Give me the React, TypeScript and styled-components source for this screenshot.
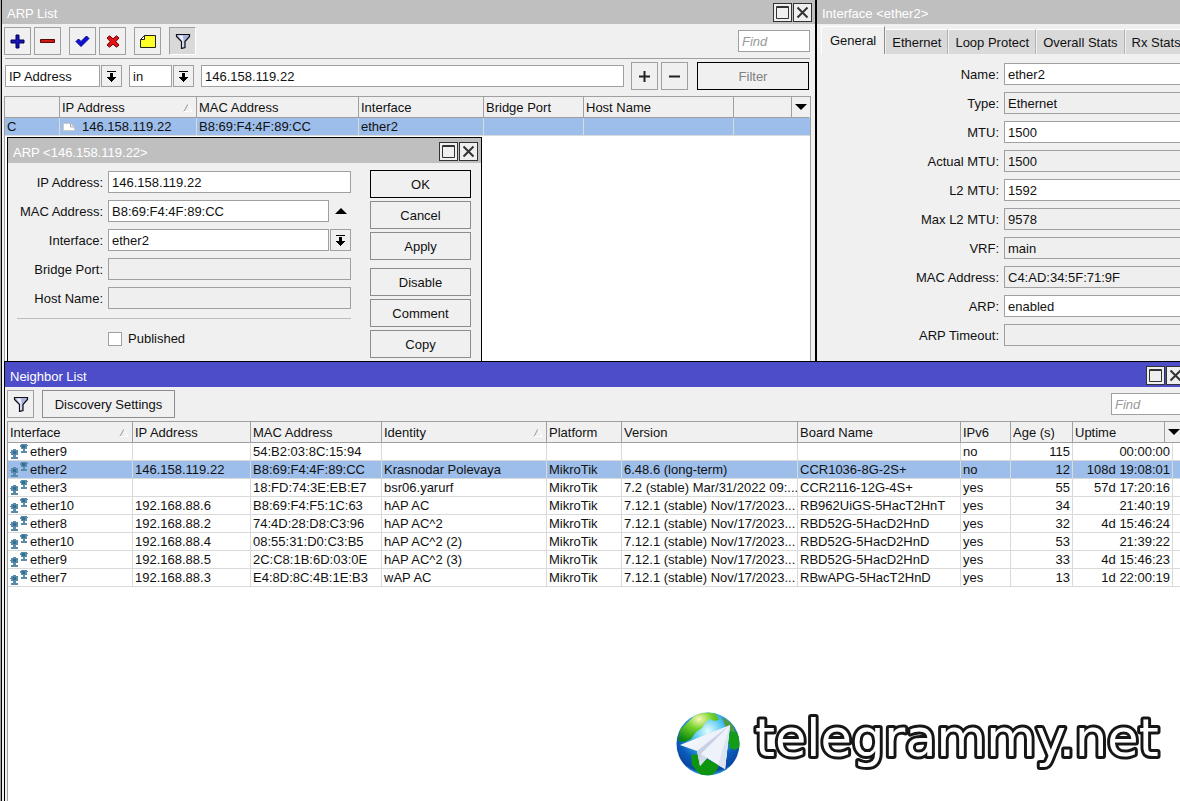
import React from "react";
import styled, { createGlobalStyle, css } from "styled-components";

const GlobalStyle = createGlobalStyle`
  *, *::before, *::after { box-sizing: border-box; }
  body {
    margin: 0;
    background: #a9a9a9;
    font: 13px/16px "Liberation Sans", Arial, sans-serif;
    color: #111;
  }
  button, input, select { font: inherit; color: inherit; margin: 0; border-radius: 0; }
`;

const Desktop = styled.main`
  position: relative;
  height: 100vh;
  min-height: 620px;
  overflow: hidden;
`;

/* Windows are placed freely on the desktop, by their edges. */
const WindowFrame = styled.section<{
  $top: number;
  $left: number;
  $right?: number;
  $width?: number;
  $fill?: boolean;
}>`
  position: absolute;
  top: ${(p) => p.$top}px;
  left: ${(p) => p.$left}px;
  ${(p) => p.$right !== undefined && `right: ${p.$right}px;`}
  ${(p) => p.$width !== undefined && `width: ${p.$width}px;`}
  ${(p) => p.$fill && "bottom: -2px;"}
  display: flex;
  flex-direction: column;
  border: 1px solid #000;
  background: #f0f0f0;
`;

const TitleBar = styled.header<{ $active?: boolean }>`
  display: flex;
  align-items: flex-start;
  gap: 1px;
  height: 25px;
  padding: 4px 3px 0 5px;
  background: ${(p) => (p.$active ? "#4d4dc9" : "#bfbfbf")};
  color: #fff;
`;

const Title = styled.h2`
  flex: 1;
  margin: 0;
  padding-top: 3px;
  font-size: 13px;
  line-height: 16px;
  font-weight: normal;
`;

const TitleButton = styled.button`
  display: flex;
  align-items: center;
  justify-content: center;
  width: 19px;
  height: 19px;
  padding: 0;
  border: 1px solid #333;
  background: #efefef;
`;

const WindowBody = styled.div`
  flex: 1;
  display: flex;
  flex-direction: column;
  padding: 3px 4px 0 2px;
`;

const Toolbar = styled.div`
  display: flex;
  align-items: center;
  gap: 8px;
  padding-right: 1px;
`;

const ButtonGroup = styled.div`
  display: flex;
  gap: 3px;
`;

const ConditionButtons = styled(ButtonGroup)`
  padding-right: 2px;
`;

const Spacer = styled.div`
  flex: 1;
`;

const ToolButton = styled.button<{ $pressed?: boolean }>`
  display: flex;
  align-items: center;
  justify-content: center;
  width: 27px;
  height: 28px;
  padding: 0;
  border: 1px solid #a0a0a0;
  background: #f0f0f0;
  ${(p) =>
    p.$pressed &&
    css`
      background: #d9d9d9;
      border-color: #a0a0a0 #fff #fff #a0a0a0;
    `}
`;

const PushButton = styled.button<{ $primary?: boolean; $muted?: boolean; $width: number }>`
  width: ${(p) => p.$width}px;
  height: 28px;
  padding: 1px 0 0;
  border: 1px solid ${(p) => (p.$primary ? "#000" : "#8c8c8c")};
  background: #f0f0f0;
  color: ${(p) => (p.$muted ? "#808080" : "#111")};
`;

const fieldLook = css`
  height: 22px;
  padding: 0 3px;
  border: 1px solid #a0a0a0;
  outline: none;
  background: #fff;
`;

const TextField = styled.input`
  ${fieldLook}
  flex: 1;
  min-width: 0;
  &:read-only { background: #efefef; }
`;

const FindField = styled.input`
  ${fieldLook}
  width: 72px;
  &::placeholder { color: #9a9a9a; font-style: italic; opacity: 1; }
`;

const SelectField = styled.select<{ $width?: number }>`
  ${fieldLook}
  padding: 1px 0 0 3px;
  appearance: none;
  ${(p) => (p.$width ? `width: ${p.$width}px;` : "flex: 1; min-width: 0;")}
`;

const Combo = styled.div`
  flex: 1;
  display: flex;
  gap: 1px;
`;

const FixedCombo = styled(Combo)`
  flex: none;
`;

const DropButton = styled.button<{ $plain?: boolean }>`
  display: flex;
  align-items: center;
  justify-content: center;
  width: 21px;
  height: 22px;
  padding: 0;
  border: 1px solid ${(p) => (p.$plain ? "transparent" : "#a0a0a0")};
  background: #f0f0f0;
`;

const Divider = styled.hr`
  height: 1px;
  margin: 3px 1px 3px 1px;
  border: 0;
  background: #a0a0a0;
`;

const FilterRow = styled.div`
  display: flex;
  align-items: center;
  gap: 7px;
  margin-bottom: 6px;
  padding: 0 2px 0 1px;
`;

const TablePane = styled.div`
  position: relative;
  flex: 1;
  border: 1px solid #a0a0a0;
  background: #fff;
`;

const ToolSpace = styled.div`
  height: 3px;
`;

const ColumnsButton = styled.button`
  position: absolute;
  top: 0;
  right: 0;
  display: flex;
  align-items: center;
  justify-content: center;
  width: 19px;
  height: 20px;
  padding: 0;
  border: 0;
  border-left: 1px solid #a0a0a0;
  background: #f0f0f0;
`;

const DataTable = styled.table`
  width: 100%;
  table-layout: fixed;
  border-collapse: separate;
  border-spacing: 0;
`;

const HeadCell = styled.th<{ $last?: boolean }>`
  height: 21px;
  padding: 1px 3px 0 2px;
  border-right: 1px solid ${(p) => (p.$last ? "transparent" : "#a0a0a0")};
  border-bottom: 1px solid #a0a0a0;
  background: #f0f0f0;
  background-clip: padding-box;
  font-weight: normal;
  text-align: left;
  white-space: nowrap;
`;

const HeadLabel = styled.span`
  display: flex;
  align-items: center;
  justify-content: space-between;
  padding-top: 1px;
`;

const BodyRow = styled.tr<{ $selected?: boolean }>`
  background: ${(p) => (p.$selected ? "#9dbeea" : "#fff")};
`;

const Cell = styled.td<{ $right?: boolean; $last?: boolean }>`
  height: 18px;
  padding: 0 2px;
  border-right: ${(p) => (p.$last ? "0" : "1px solid #dadada")};
  border-bottom: 1px solid #dadada;
  line-height: 16px;
  text-align: ${(p) => (p.$right ? "right" : "left")};
  white-space: nowrap;
  overflow: hidden;
`;

const IconText = styled.span<{ $gap: number }>`
  display: flex;
  align-items: center;
  gap: ${(p) => p.$gap}px;
`;

const DialogBody = styled.form`
  display: flex;
  gap: 19px;
  padding: 7px 10px 10px 9px;
`;

const Fields = styled.div`
  display: flex;
  flex-direction: column;
  flex: 1;
  gap: 7px;
  padding-top: 1px;
`;

const FieldRow = styled.div<{ $label: number }>`
  display: flex;
  align-items: center;
  gap: 5px;
  & > label:first-child {
    width: ${(p) => p.$label}px;
    padding-top: 2px;
    text-align: right;
    white-space: nowrap;
  }
`;

const FormRule = styled.hr`
  width: 100%;
  height: 1px;
  margin: 2px 0 5px;
  border: 0;
  background: #bcbcbc;
`;

const CheckRow = styled.label`
  display: flex;
  align-items: center;
  gap: 6px;
  padding-left: 91px;
`;

const CheckBox = styled.input`
  appearance: none;
  width: 14px;
  height: 14px;
  border: 1px solid #a0a0a0;
  background: #fff;
`;

const DialogButtons = styled.div`
  display: flex;
  flex-direction: column;
  gap: 8px;
`;

const ButtonStack = styled.div`
  display: flex;
  flex-direction: column;
  gap: 3px;
`;

const TabStrip = styled.div`
  display: flex;
  align-items: flex-end;
  gap: 1px;
  padding: 2px 0 0 4px;
`;

const Tab = styled.button<{ $active?: boolean }>`
  flex: none;
  height: ${(p) => (p.$active ? 28 : 25)}px;
  padding: ${(p) => (p.$active ? "0 8px" : "1px 6px 0")};
  border: 0;
  border-top: 1px solid #fff;
  border-left: ${(p) => (p.$active ? "1px solid #fff" : "0")};
  border-right: 1px solid ${(p) => (p.$active ? "#8c8c8c" : "#b4b4b4")};
  background: ${(p) => (p.$active ? "#f0f0f0" : "#d9d9d9")};
  white-space: nowrap;
`;

const InterfaceForm = styled.form`
  display: flex;
  flex-direction: column;
  gap: 7px;
  padding-top: 9px;
`;

const Watermark = styled.div`
  position: absolute;
  right: 12px;
  bottom: 22px;
  display: flex;
  align-items: center;
  gap: 4px;
`;

const DropIcon = () => (
  <svg width="11" height="11" viewBox="0 0 11 11" shapeRendering="crispEdges">
    <path d="M1 0h9v1H1zM4 2h3v4h3v1H9v1H8v1H7v1H6v1H5v-1H4V9H3V8H2V7H1V6h3z" fill="#000" />
  </svg>
);

const Triangle = ({ up }: { up?: boolean }) => (
  <svg width="12" height="6" viewBox="0 0 12 6">
    <path d={up ? "M0 6L6 0l6 6z" : "M0 0h12L6 6z"} fill="#000" />
  </svg>
);

const SortMark = () => (
  <svg width="10" height="10" viewBox="0 0 10 10" fill="none">
    <path d="M1 8.5L5 1" stroke="#999" />
    <path d="M5 1l4 7.5H1" stroke="#fff" />
  </svg>
);

const FunnelIcon = () => (
  <svg width="16" height="16" viewBox="0 0 16 16">
    <path d="M1.5 1.500h13v2L10 8.500v6L6.500 15.500v-7L1.500 3.500z" fill="#a9b2e2" stroke="#111" strokeWidth="1.200" />
    <path d="M3 2.500h5L8.500 8v6L7.300 14V8z" fill="#eef0ff" />
  </svg>
);

const PlusIcon = () => (
  <svg width="15" height="15" viewBox="0 0 15 15">
    <path d="M6 1h3v5h5v3H9v5H6V9H1V6h5z" fill="#1414b4" stroke="#000060" />
  </svg>
);

const MinusIcon = () => (
  <svg width="15" height="4" viewBox="0 0 15 4">
    <path d="M.5.5h14v3H.5z" fill="#d01818" stroke="#5a0808" />
  </svg>
);

const CheckIcon = () => (
  <svg width="15" height="13" viewBox="0 0 15 13">
    <path d="M1 6.500L3.500 4 6 6.500 11.500 1 14 3.500 6 11.500z" fill="#1010dc" stroke="#000080" />
  </svg>
);

const CrossIcon = () => (
  <svg width="14" height="13" viewBox="0 0 14 13">
    <path
      d="M1 3L3.500.8 7 3.800 10.500.8 13 3 9.800 6.500 13 10l-2.500 2.200L7 9.200l-3.500 3L1 10l3.200-3.500z"
      fill="#e01414"
      stroke="#700000"
    />
  </svg>
);

const NoteIcon = () => (
  <svg width="16" height="13" viewBox="0 0 16 13">
    <path d="M4.500.5h11v12H.5v-8z" fill="#ffff28" stroke="#222" />
    <path d="M4.500.5v4h-4z" fill="#fff" stroke="#222" />
  </svg>
);

const PageIcon = () => (
  <svg width="14" height="10" viewBox="0 0 14 10">
    <path d="M1.500 1.500h7l4 3.500v3.500h-11z" fill="#fff" stroke="#c9c9c9" />
    <path d="M8.500 1.500V5h4" fill="none" stroke="#aaa" />
  </svg>
);

const NeighborIcon = () => (
  <svg width="18" height="16" viewBox="0 0 18 16" fill="#5a8caa">
    <path d="M3 5h3v1h2v5H6v2h2v2H1v-2h2v-2H1V9H0V8h1V6h2z" />
    <path d="M11 0h6v1h1v1h-1v3h-2v2h2v2h-6V7h2V5h-2V3h-1V1h1z" />
    <path d="M3 7h3v3H3zM12 1h3v3h-3z" fill="#336f95" />
  </svg>
);

const GlobeIcon = () => (
  <svg width="64" height="64" viewBox="0 0 64 64">
    <defs>
      <radialGradient id="sea" cx="50%" cy="30%" r="68%">
        <stop offset="0" stopColor="#e6feff" />
        <stop offset=".36" stopColor="#4cc4f0" />
        <stop offset=".7" stopColor="#0b5cbc" />
        <stop offset=".92" stopColor="#0a47a0" />
        <stop offset="1" stopColor="#2b9be0" />
      </radialGradient>
      <radialGradient id="land" cx="52%" cy="24%" r="80%">
        <stop offset="0" stopColor="#fbf9b8" />
        <stop offset=".4" stopColor="#74d02a" />
        <stop offset="1" stopColor="#08860e" />
      </radialGradient>
      <linearGradient id="paper" x1="0" y1="0" x2="1" y2="1">
        <stop offset="0" stopColor="#fff" />
        <stop offset="1" stopColor="#d9e0f0" />
      </linearGradient>
      <clipPath id="disc">
        <circle cx="32" cy="32" r="31.500" />
      </clipPath>
    </defs>
    <g clipPath="url(#disc)">
      <path d="M0 0h64v64H0z" fill="url(#sea)" />
      <path d="M20 2l12-2 8 2 3 6-5 1-4-2-4 3-4 6-6 4-5 7-7 3-6-1L4 18z" fill="url(#land)" />
      <path d="M46 5l9 6 5 9-5-1-5-3-2-5z" fill="#4f9a3c" />
      <path d="M54 19l10 2v14l-5 3-5-2-2-8z" fill="#129c18" />
      <path d="M15 43l8-1 12 7 8 3-2 6-5 5-10 1-6-6-4-5z" fill="#0d950f" />
    </g>
    <path d="M54 13L4 33l17 6 3 15 7-8 18 11z" fill="url(#paper)" />
    <path d="M54 13L21 39l3 15 1-12z" fill="#c6d0e4" />
    <path d="M54 13L25 42l-1 12 7-8z" fill="#d3dbea" />
    <path d="M54 13L25 42l24 15z" fill="#eef2fb" />
    <path d="M54 13L42 53l7 4z" fill="#dde4f1" />
  </svg>
);

const Wordmark = () => (
  <svg width="424" height="70" viewBox="0 0 424 70">
    <text
      x="11"
      y="47"
      fontFamily="'DejaVu Sans', Verdana, sans-serif"
      fontSize="51"
      fill="#fff"
      stroke="#161616"
      strokeWidth="6"
      strokeLinejoin="round"
      paintOrder="stroke"
    >
      telegrammy.net
    </text>
  </svg>
);

const WindowButtons = () => (
  <>
    <TitleButton aria-label="Maximize">
      <svg width="13" height="13" viewBox="0 0 13 13">
        <path d="M.5.5h12v12H.5zM.5 1.500h12" fill="none" stroke="#333" />
      </svg>
    </TitleButton>
    <TitleButton aria-label="Close">
      <svg width="13" height="13" viewBox="0 0 13 13">
        <path d="M1.500 1.500l10 10M11.500 1.500l-10 10" stroke="#333" strokeWidth="2" />
      </svg>
    </TitleButton>
  </>
);

const arpColumns = [
  { label: "", width: 55 },
  { label: "IP Address", width: 137, sort: true },
  { label: "MAC Address", width: 162 },
  { label: "Interface", width: 125 },
  { label: "Bridge Port", width: 100 },
  { label: "Host Name", width: 150 },
];

const neighborColumns = [
  { label: "Interface", width: 125, sort: true },
  { label: "IP Address", width: 118 },
  { label: "MAC Address", width: 131 },
  { label: "Identity", width: 165, sort: true },
  { label: "Platform", width: 75 },
  { label: "Version", width: 176 },
  { label: "Board Name", width: 163 },
  { label: "IPv6", width: 50 },
  { label: "Age (s)", width: 62 },
  { label: "Uptime", width: 100 },
];

const neighbors = [
  ["ether9", "", "54:B2:03:8C:15:94", "", "", "", "", "no", "115", "00:00:00"],
  ["ether2", "146.158.119.22", "B8:69:F4:4F:89:CC", "Krasnodar Polevaya", "MikroTik", "6.48.6 (long-term)", "CCR1036-8G-2S+", "no", "12", "108d 19:08:01"],
  ["ether3", "", "18:FD:74:3E:EB:E7", "bsr06.yarurf", "MikroTik", "7.2 (stable) Mar/31/2022 09:...", "CCR2116-12G-4S+", "yes", "55", "57d 17:20:16"],
  ["ether10", "192.168.88.6", "B8:69:F4:F5:1C:63", "hAP AC", "MikroTik", "7.12.1 (stable) Nov/17/2023...", "RB962UiGS-5HacT2HnT", "yes", "34", "21:40:19"],
  ["ether8", "192.168.88.2", "74:4D:28:D8:C3:96", "hAP AC^2", "MikroTik", "7.12.1 (stable) Nov/17/2023...", "RBD52G-5HacD2HnD", "yes", "32", "4d 15:46:24"],
  ["ether10", "192.168.88.4", "08:55:31:D0:C3:B5", "hAP AC^2 (2)", "MikroTik", "7.12.1 (stable) Nov/17/2023...", "RBD52G-5HacD2HnD", "yes", "53", "21:39:22"],
  ["ether9", "192.168.88.5", "2C:C8:1B:6D:03:0E", "hAP AC^2 (3)", "MikroTik", "7.12.1 (stable) Nov/17/2023...", "RBD52G-5HacD2HnD", "yes", "33", "4d 15:46:23"],
  ["ether7", "192.168.88.3", "E4:8D:8C:4B:1E:B3", "wAP AC", "MikroTik", "7.12.1 (stable) Nov/17/2023...", "RBwAPG-5HacT2HnD", "yes", "13", "1d 22:00:19"],
];

const interfaceFields = [
  { label: "Name", value: "ether2" },
  { label: "Type", value: "Ethernet", fixed: true },
  { label: "MTU", value: "1500" },
  { label: "Actual MTU", value: "1500", fixed: true },
  { label: "L2 MTU", value: "1592" },
  { label: "Max L2 MTU", value: "9578", fixed: true },
  { label: "VRF", value: "main", fixed: true },
  { label: "MAC Address", value: "C4:AD:34:5F:71:9F", fixed: true },
  { label: "ARP", value: "enabled" },
  { label: "ARP Timeout", value: "", fixed: true },
];

type Column = { label: string; width: number; sort?: boolean };

const TableHead = ({ columns }: { columns: Column[] }) => (
  <>
    <colgroup>
      {columns.map((c, i) => (
        <col key={i} width={c.width} />
      ))}
      <col />
    </colgroup>
    <thead>
      <tr>
        {columns.map((c, i) => (
          <HeadCell key={i} scope="col">
            <HeadLabel>
              {c.label}
              {c.sort && <SortMark />}
            </HeadLabel>
          </HeadCell>
        ))}
        <HeadCell $last />
      </tr>
    </thead>
  </>
);

const ArpListWindow = () => (
  <WindowFrame $top={-2} $left={1} $width={815} $fill>
    <TitleBar>
      <Title>ARP List</Title>
      <WindowButtons />
    </TitleBar>
    <WindowBody>
      <Toolbar>
        <ButtonGroup>
          <ToolButton aria-label="Add"><PlusIcon /></ToolButton>
          <ToolButton aria-label="Remove"><MinusIcon /></ToolButton>
        </ButtonGroup>
        <ButtonGroup>
          <ToolButton aria-label="Enable"><CheckIcon /></ToolButton>
          <ToolButton aria-label="Disable"><CrossIcon /></ToolButton>
        </ButtonGroup>
        <ToolButton aria-label="Comment"><NoteIcon /></ToolButton>
        <ToolButton aria-label="Filter" aria-pressed="true" $pressed><FunnelIcon /></ToolButton>
        <Spacer />
        <FindField aria-label="Find" placeholder="Find" />
      </Toolbar>
      <Divider />
      <FilterRow>
        <FixedCombo>
          <SelectField aria-label="Filter field" $width={95}><option>IP Address</option></SelectField>
          <DropButton aria-label="Choose field"><DropIcon /></DropButton>
        </FixedCombo>
        <FixedCombo>
          <SelectField aria-label="Filter operator" $width={43}><option>in</option></SelectField>
          <DropButton aria-label="Choose operator"><DropIcon /></DropButton>
        </FixedCombo>
        <TextField aria-label="Filter value" defaultValue="146.158.119.22" />
        <ConditionButtons>
          <ToolButton aria-label="Add condition">
            <svg width="11" height="11" viewBox="0 0 11 11"><path d="M0 5.500h11M5.500 0v11" stroke="#222" strokeWidth="2" /></svg>
          </ToolButton>
          <ToolButton aria-label="Remove condition">
            <svg width="11" height="11" viewBox="0 0 11 11"><path d="M0 5.500h11" stroke="#222" strokeWidth="2" /></svg>
          </ToolButton>
        </ConditionButtons>
        <PushButton $width={112} $primary $muted>Filter</PushButton>
      </FilterRow>
      <TablePane>
        <DataTable>
          <TableHead columns={arpColumns} />
          <tbody>
            <BodyRow $selected>
              <Cell>C</Cell>
              <Cell><IconText $gap={6}><PageIcon />146.158.119.22</IconText></Cell>
              <Cell>B8:69:F4:4F:89:CC</Cell>
              <Cell>ether2</Cell>
              <Cell />
              <Cell />
              <Cell $last />
            </BodyRow>
          </tbody>
        </DataTable>
        <ColumnsButton aria-label="Columns"><Triangle /></ColumnsButton>
      </TablePane>
    </WindowBody>
  </WindowFrame>
);

const InterfaceWindow = () => (
  <WindowFrame $top={-2} $left={816} $right={-60} $fill>
    <TitleBar>
      <Title>Interface &lt;ether2&gt;</Title>
    </TitleBar>
    <TabStrip role="tablist">
      <Tab role="tab" aria-selected="true" $active>General</Tab>
      <Tab role="tab">Ethernet</Tab>
      <Tab role="tab">Loop Protect</Tab>
      <Tab role="tab">Overall Stats</Tab>
      <Tab role="tab">Rx Stats</Tab>
    </TabStrip>
    <InterfaceForm>
      {interfaceFields.map((f, i) => (
        <FieldRow key={f.label} $label={182}>
          <label htmlFor={`interface-${i}`}>{f.label}:</label>
          <TextField id={`interface-${i}`} defaultValue={f.value} readOnly={f.fixed} />
        </FieldRow>
      ))}
    </InterfaceForm>
  </WindowFrame>
);

const ArpDialog = () => (
  <WindowFrame $top={137} $left={7} $width={475}>
    <TitleBar>
      <Title>ARP &lt;146.158.119.22&gt;</Title>
      <WindowButtons />
    </TitleBar>
    <DialogBody>
      <Fields>
        <FieldRow $label={86}>
          <label htmlFor="arp-ip">IP Address:</label>
          <TextField id="arp-ip" defaultValue="146.158.119.22" />
        </FieldRow>
        <FieldRow $label={86}>
          <label htmlFor="arp-mac">MAC Address:</label>
          <Combo>
            <TextField id="arp-mac" defaultValue="B8:69:F4:4F:89:CC" />
            <DropButton type="button" aria-label="Clear MAC address" $plain><Triangle up /></DropButton>
          </Combo>
        </FieldRow>
        <FieldRow $label={86}>
          <label htmlFor="arp-interface">Interface:</label>
          <Combo>
            <SelectField id="arp-interface"><option>ether2</option></SelectField>
            <DropButton type="button" aria-label="Choose interface"><DropIcon /></DropButton>
          </Combo>
        </FieldRow>
        <FieldRow $label={86}>
          <label htmlFor="arp-bridge">Bridge Port:</label>
          <TextField id="arp-bridge" readOnly />
        </FieldRow>
        <FieldRow $label={86}>
          <label htmlFor="arp-host">Host Name:</label>
          <TextField id="arp-host" readOnly />
        </FieldRow>
        <FormRule />
        <CheckRow>
          <CheckBox type="checkbox" />
          Published
        </CheckRow>
      </Fields>
      <DialogButtons>
        <ButtonStack>
          <PushButton type="button" $width={101} $primary>OK</PushButton>
          <PushButton type="button" $width={101}>Cancel</PushButton>
          <PushButton type="button" $width={101}>Apply</PushButton>
        </ButtonStack>
        <ButtonStack>
          <PushButton type="button" $width={101}>Disable</PushButton>
          <PushButton type="button" $width={101}>Comment</PushButton>
          <PushButton type="button" $width={101}>Copy</PushButton>
        </ButtonStack>
      </DialogButtons>
    </DialogBody>
  </WindowFrame>
);

const NeighborWindow = () => (
  <WindowFrame $top={361} $left={4} $right={-9} $fill>
    <TitleBar $active>
      <Title>Neighbor List</Title>
      <WindowButtons />
    </TitleBar>
    <WindowBody>
      <Toolbar>
        <ToolButton aria-label="Filter"><FunnelIcon /></ToolButton>
        <PushButton $width={133}>Discovery Settings</PushButton>
        <Spacer />
        <FindField aria-label="Find" placeholder="Find" />
      </Toolbar>
      <ToolSpace />
      <TablePane>
        <DataTable>
          <TableHead columns={neighborColumns} />
          <tbody>
            {neighbors.map((row, r) => (
              <BodyRow key={r} $selected={r === 1}>
                {row.map((value, c) => (
                  <Cell key={c} $right={c >= 8}>
                    {c === 0 ? <IconText $gap={2}><NeighborIcon />{value}</IconText> : value}
                  </Cell>
                ))}
                <Cell $last />
              </BodyRow>
            ))}
          </tbody>
        </DataTable>
        <ColumnsButton aria-label="Columns"><Triangle /></ColumnsButton>
      </TablePane>
    </WindowBody>
  </WindowFrame>
);

export default function App() {
  return (
    <>
      <GlobalStyle />
      <Desktop>
        <ArpListWindow />
        <InterfaceWindow />
        <ArpDialog />
        <NeighborWindow />
        <Watermark>
          <GlobeIcon />
          <Wordmark />
        </Watermark>
      </Desktop>
    </>
  );
}
